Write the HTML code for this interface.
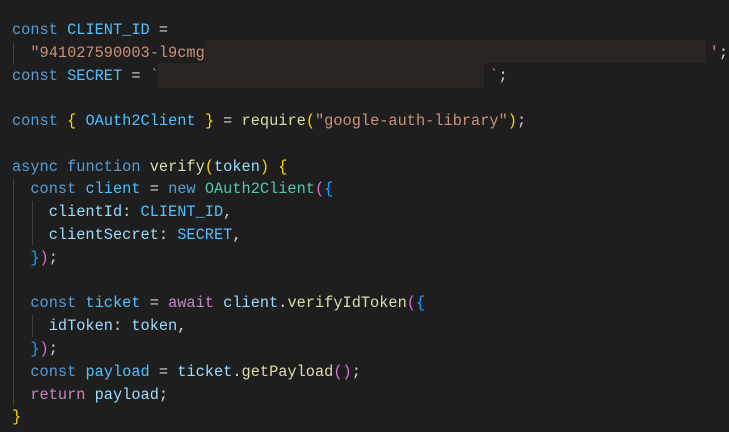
<!DOCTYPE html>
<html><head><style>
html,body{margin:0;padding:0;background:#1e1e1e;width:729px;height:432px;overflow:hidden}
pre{margin:0;position:absolute;left:12px;top:19px;font-family:"Liberation Mono",monospace;font-size:15.3px;line-height:22.78px;color:#d4d4d4}
.k{color:#569cd6}.c{color:#4fc1ff}.v{color:#9cdcfe}.f{color:#dcdcaa}.t{color:#4ec9b0}.s{color:#ce9178}.p{color:#c586c0}
.b1{color:#ffd700}.b2{color:#da70d6}.b3{color:#179fff}
.blur{position:absolute;background:#2a2523}
.g{position:absolute;width:1px;background:#404040}
</style></head><body>
<div class="g" style="left:13px;top:42px;height:22px"></div>
<div class="g" style="left:13px;top:178px;height:228px"></div>
<div class="g" style="left:32px;top:201px;height:44px"></div>
<div class="g" style="left:32px;top:315px;height:22px"></div>
<pre><span class="k">const</span> <span class="c">CLIENT_ID</span> =
  <span class="s">"941027590003-l9cmg                                                       '</span>;
<span class="k">const</span> <span class="c">SECRET</span> = <span class="s">`                                    `</span>;

<span class="k">const</span> <span class="b1">{</span> <span class="c">OAuth2Client</span> <span class="b1">}</span> = <span class="f">require</span><span class="b1">(</span><span class="s">"google-auth-library"</span><span class="b1">)</span>;

<span class="k">async</span> <span class="k">function</span> <span class="f">verify</span><span class="b1">(</span><span class="v">token</span><span class="b1">)</span> <span class="b1">{</span>
  <span class="k">const</span> <span class="c">client</span> = <span class="k">new</span> <span class="t">OAuth2Client</span><span class="b2">(</span><span class="b3">{</span>
    <span class="v">clientId</span>: <span class="c">CLIENT_ID</span>,
    <span class="v">clientSecret</span>: <span class="c">SECRET</span>,
  <span class="b3">}</span><span class="b2">)</span>;

  <span class="k">const</span> <span class="c">ticket</span> = <span class="p">await</span> <span class="v">client</span>.<span class="f">verifyIdToken</span><span class="b2">(</span><span class="b3">{</span>
    <span class="v">idToken</span>: <span class="v">token</span>,
  <span class="b3">}</span><span class="b2">)</span>;
  <span class="k">const</span> <span class="c">payload</span> = <span class="v">ticket</span>.<span class="f">getPayload</span><span class="b2">()</span>;
  <span class="p">return</span> <span class="v">payload</span>;
<span class="b1">}</span></pre>
<div class="blur" style="left:205px;top:40px;width:500px;height:23px"></div>
<div class="blur" style="left:158px;top:63px;width:326px;height:25px"></div>
</body></html>
